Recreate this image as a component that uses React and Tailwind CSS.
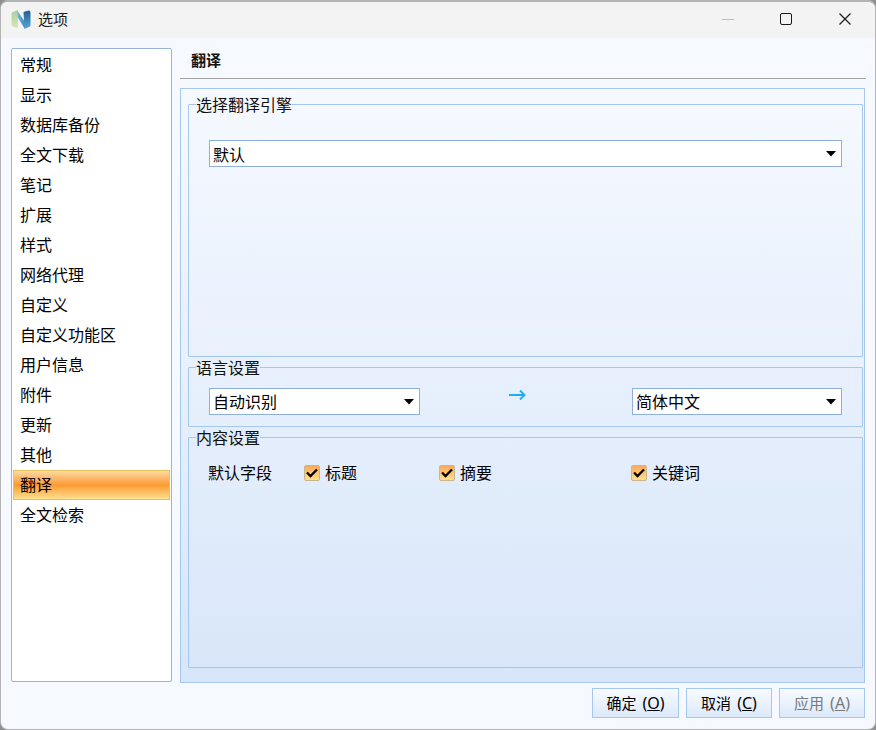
import React from "react";

const font = { fontFamily: '"Noto Sans", "Noto Sans CJK SC", sans-serif' };

const menuItems = [
  "常规", "显示", "数据库备份", "全文下载", "笔记", "扩展", "样式", "网络代理",
  "自定义", "自定义功能区", "用户信息", "附件", "更新", "其他", "翻译", "全文检索",
];

const Logo = () => (
  <svg width="20" height="21" viewBox="0 0 20 21" className="shrink-0">
    <defs>
      <linearGradient id="logoLeft" x1="0" y1="0" x2="0" y2="1">
        <stop offset="0" stopColor="#a9cfa0" />
        <stop offset="1" stopColor="#d5e6b4" />
      </linearGradient>
      <linearGradient id="logoMid" x1="0" y1="0" x2="1" y2="1">
        <stop offset="0" stopColor="#7fc0dc" />
        <stop offset="1" stopColor="#2f86c0" />
      </linearGradient>
      <linearGradient id="logoRight" x1="0" y1="0" x2="0" y2="1">
        <stop offset="0" stopColor="#1f5f94" />
        <stop offset="1" stopColor="#5aa8d8" />
      </linearGradient>
    </defs>
    <path d="M0.5 5 Q0.5 3.5 2 3 L6.5 1 L7 19 L2 17.5 Q0.5 17 0.5 15.5 Z" fill="url(#logoLeft)" />
    <path d="M6 1 L14 13 L14 20 L6.5 8 Z" fill="url(#logoMid)" />
    <path d="M12.5 3 L17.5 1.5 Q19.5 1.5 19.5 3.5 L19.5 16 Q19.5 17.5 18 18 L13.5 20 Z" fill="url(#logoRight)" />
  </svg>
);

const Combo = ({ text, className, textClass }) => (
  <div className={`flex h-[27px] items-center justify-between border border-[#8fb0dc] bg-white pl-[3px] pr-[5px] text-[16px] leading-none text-black ${className}`}>
    <span className={textClass}>{text}</span>
    <svg width="10" height="6" viewBox="0 0 10 6"><path d="M0 0 H10 L5 5.5 Z" fill="#000" /></svg>
  </div>
);

const Check = ({ label, className }) => (
  <div className={`flex items-center ${className}`}>
    <span className="flex h-4 w-4 items-center justify-center rounded-[2px] border border-[#c9b78c] bg-gradient-to-b from-[#fca95a] to-[#ffdf8c]">
      <svg width="12" height="10" viewBox="0 0 12 10"><path d="M1 4.5 L4.5 8 L11 1.5" fill="none" stroke="#000" strokeWidth="2.3" /></svg>
    </span>
    <span className="ml-[5px] text-[16px] leading-none text-black">{label}</span>
  </div>
);

const Group = ({ title, labelBg, className, children }) => (
  <div className={`relative rounded-[1px] border border-[#a5c8f0] ${className}`}>
    <span className={`absolute left-[7px] top-[-10px] text-[16px] leading-[20px] text-[#111] ${labelBg}`}>{title}</span>
    {children}
  </div>
);

const Btn = ({ label, hot, className, disabled }) => (
  <div className={`flex h-[30px] items-center justify-center border border-[#a5c8f0] bg-gradient-to-b from-[#f8fbff] to-[#dce9fa] text-[15px] leading-none ${disabled ? "text-[#7a7a7a]" : "text-black"} ${className}`}>
    {label}
    <span className="ml-[6px] text-[16px]">
      (<span className="underline">{hot}</span>)
    </span>
  </div>
);

export default function App() {
  return (
    <div className="h-[730px] w-[876px] overflow-hidden bg-[#8f8f8f]" style={font}>
      <div className="flex h-[730px] w-[876px] flex-col overflow-hidden rounded-[8px] border border-t-2 border-[#b4b4b4] bg-[#f6f9ff]">
        {/* title bar */}
        <div className="flex h-[36px] shrink-0 items-center bg-[#f3f3f3] pb-[2px] pl-[10px]">
          <Logo />
          <span className="ml-[7px] text-[15px] leading-none text-[#1a1a1a]">选项</span>
          <div className="ml-auto flex items-center">
            <span className="mr-[46px] h-px w-[12px] bg-[#bdbdbd]" />
            <span className="mr-[47px] h-[12px] w-[12px] rounded-[2px] border-[1.5px] border-[#1a1a1a]" />
            <svg width="12" height="12" viewBox="0 0 12 12" className="mr-[24px]"><path d="M0.5 0.5 L11.5 11.5 M11.5 0.5 L0.5 11.5" stroke="#1a1a1a" strokeWidth="1.2" /></svg>
          </div>
        </div>

        <div className="flex flex-1 flex-col pl-[10px] pr-[10px] pt-[10px]">
          <div className="flex h-[635px] gap-[8px]">
            {/* left list */}
            <div className="flex h-[634px] w-[161px] shrink-0 flex-col rounded-[2px] border border-[#9ab3dc] bg-white px-[1px] pt-[1px]">
              {menuItems.map((item) =>
                item === "翻译" ? (
                  <div key={item} className="flex h-[30px] items-center border border-[#e5c35c] bg-gradient-to-b from-[#fdd9a0] via-[#fd9a2e] to-[#ffe08c] pl-[6px] text-[16px] leading-none text-black">
                    {item}
                  </div>
                ) : (
                  <div key={item} className="flex h-[30px] items-center pl-[7px] text-[16px] leading-none text-black">
                    {item}
                  </div>
                )
              )}
            </div>

            {/* right side */}
            <div className="flex min-w-0 flex-1 flex-col">
              <div className="-mr-px h-[31px] shrink-0 border-b border-[#a0a0a0] pl-[11px] text-[15px] font-bold leading-[24px] text-[#111]">
                翻译
              </div>
              <div className="mt-[9px] flex h-[595px] flex-col gap-[10px] border border-[#a5c8f0] bg-gradient-to-b from-[#f6f9ff] to-[#d8e6f9] pb-[14px] pl-[7px] pr-[1px] pt-[15px]">
                <Group title="选择翻译引擎" labelBg="bg-[#f5f9ff]" className="h-[253px] shrink-0 px-[20px] pt-[35px]">
                  <Combo text="默认" className="w-[633px]" textClass="pt-[2px]" />
                </Group>
                <Group title="语言设置" labelBg="bg-[#e7f0fb]" className="h-[60px] shrink-0 pl-[20px] pt-[20px]">
                  <div className="flex items-start">
                    <Combo text="自动识别" className="w-[211px]" />
                    <svg width="18" height="12" viewBox="0 0 18 12" className="ml-[88px] mr-[106px] mt-px"><path d="M1 6 H16 M12 1.5 L16.5 6 L12 10.5" fill="none" stroke="#19aef5" strokeWidth="1.8" /></svg>
                    <Combo text="简体中文" className="w-[210px]" />
                  </div>
                </Group>
                <Group title="内容设置" labelBg="bg-[#e3edfa]" className="flex-1 pl-[19px] pt-[27px]">
                  <div className="flex items-center">
                    <span className="w-[96px] text-[16px] leading-none text-black">默认字段</span>
                    <Check label="标题" className="w-[135px]" />
                    <Check label="摘要" className="w-[192px]" />
                    <Check label="关键词" />
                  </div>
                </Group>
              </div>
            </div>
          </div>
          <div className="mt-[5px] flex justify-end gap-[7px]">
            <Btn label="确定" hot="O" className="w-[87px]" />
            <Btn label="取消" hot="C" className="w-[86px]" />
            <Btn label="应用" hot="A" className="w-[86px]" disabled />
          </div>
        </div>
      </div>
    </div>
  );
}
